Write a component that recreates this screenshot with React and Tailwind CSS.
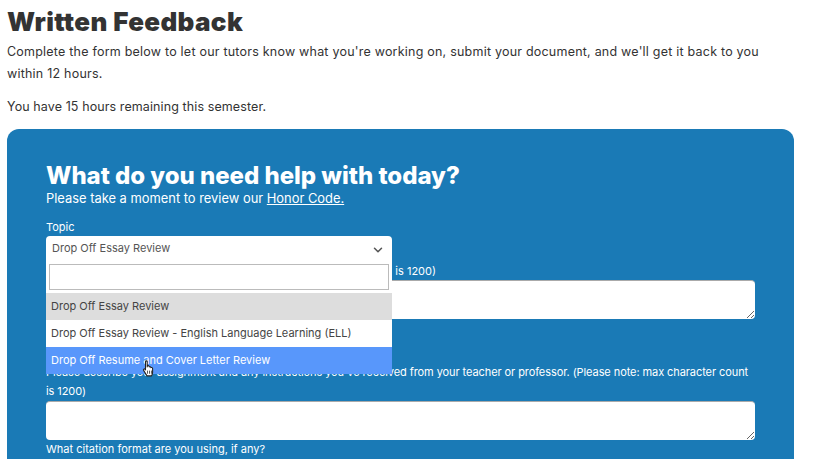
import React from 'react';
import { ChevronDown } from 'lucide-react';

const font = { fontFamily: 'Inter, "Open Sans", sans-serif' };

const options = [
  { label: 'Drop Off Essay Review', className: 'bg-[#dddddd] text-[#444444]' },
  { label: 'Drop Off Essay Review - English Language Learning (ELL)', className: 'bg-white text-[#444444]' },
  { label: 'Drop Off Resume and Cover Letter Review', className: 'bg-[#5897fb] text-white' },
];

const HandCursor = () => (
  <svg width="14" height="18" viewBox="0 0 13 17" className="absolute left-[96px] top-[99px]">
    <path
      d="M3.2 1.6c0-1 1.6-1 1.6 0v5l.3-1.2c.9-.3 1.5 0 1.5.8l.2.3c.8-.4 1.4-.1 1.5.7.8-.4 1.6 0 1.6 1v3.6c0 1.4-.5 2.2-1 3.2H4.6L1.4 9.8c-.6-1 .6-1.9 1.4-1l.4.5z"
      fill="#fff"
      stroke="#222"
      strokeWidth="1"
      strokeLinejoin="round"
    />
    <path d="M5.1 10v3M7 10v3M8.8 10v3" stroke="#222" strokeWidth="0.7" />
  </svg>
);

const TextArea = () => (
  <textarea className="block w-full h-[39px] bg-white rounded border-t border-[#aaaaaa]" readOnly />
);

export default function App() {
  return (
    <div className="h-[459px] overflow-hidden bg-white px-[7px] text-[#333333]" style={font}>
      <h1 className="pt-[6px] text-[26px] leading-[32px] font-black tracking-[0.35px] text-[#333333]">Written Feedback</h1>
      <p className="mt-[3px] text-[12.5px] leading-[22px] tracking-[0.22px]">
        Complete the form below to let our tutors know what you're working on, submit your document, and we'll get it back to you
        <br />
        within 12 hours.
      </p>
      <p className="mt-[11px] text-[12.5px] leading-[22px] tracking-[0.1px]">You have 15 hours remaining this semester.</p>

      <div className="mt-[11px] w-[787px] bg-[#1a7ab6] rounded-t-[12px] px-[39px] pt-[32px] pb-[40px] text-white">
        <h2 className="text-[24px] leading-[29px] font-extrabold tracking-[-0.03px]">What do you need help with today?</h2>
        <p className="text-[12.9px] leading-[18px]">
          Please take a moment to review our <a className="underline">Honor Code.</a>
        </p>

        <div className="relative mt-[12px]">
          <label className="block text-[11px] leading-[14px] mb-[2px]">Topic</label>
          <div className="flex items-center justify-between w-[346px] h-[25px] bg-white rounded-t pl-[6px] pr-[7px] text-[11px] text-[#555555]">
            <span>Drop Off Essay Review</span>
            <ChevronDown size={14} strokeWidth={2.6} className="text-[#555555] mt-[2px]" />
          </div>

          {/* open dropdown sits over the fields below */}
          <div className="absolute left-0 top-[41px] w-[346px] bg-white z-10">
            <div className="p-[3px]">
              <div className="h-[26px] border border-[#bbbbbb]" />
            </div>
            {options.map((option) => (
              <div key={option.label} className={`h-[27px] flex items-center px-[5px] text-[11px] ${option.className}`}>
                {option.label}
              </div>
            ))}
            <HandCursor />
          </div>
        </div>

        <p className="mt-[1px] h-[18px] text-[11px] leading-[18px] text-right pr-[319px] whitespace-nowrap">is 1200)</p>
        <TextArea />

        <p className="mt-[44px] text-[11px] leading-[19px] tracking-[-0.08px]">
          Please describe your assignment and any instructions you've received from your teacher or professor. (Please note: max character count is 1200)
        </p>
        <TextArea />
        <p className="text-[11px] leading-[18px]">What citation format are you using, if any?</p>
      </div>
    </div>
  );
}
